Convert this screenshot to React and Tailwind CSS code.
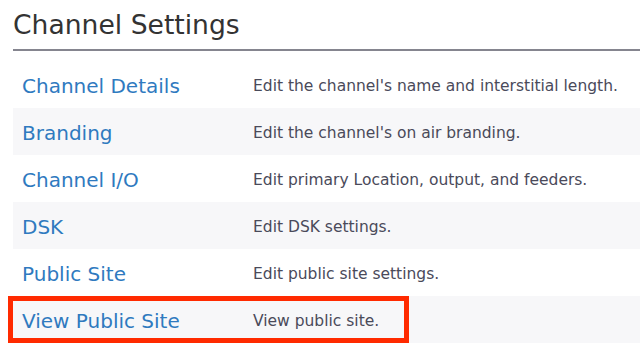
import React from "react";

const rows = [
  ["Channel Details", "Edit the channel's name and interstitial length."],
  ["Branding", "Edit the channel's on air branding."],
  ["Channel I/O", "Edit primary Location, output, and feeders."],
  ["DSK", "Edit DSK settings."],
  ["Public Site", "Edit public site settings."],
  ["View Public Site", "View public site."],
];

export default function App() {
  return (
    <div className="w-[640px] h-[361px] bg-white overflow-hidden" style={{ fontFamily: '"DejaVu Sans", Verdana, sans-serif' }}>
      <div className="pl-[13px]">
        <h1 className="text-[26.6px] leading-[32px] text-[#333333] pt-[9px] pb-[8px]">Channel Settings</h1>
        <div className="h-[2px] bg-[#85858f]" />
        <div className="mt-[10px]">
          {rows.map(([a, b], i) => (
            <div key={a} className={`relative flex items-center h-[47px] ${i % 2 === 1 ? "bg-[#f7f7f9]" : "bg-white"}`}>
              <div className="w-[240px] pl-[9px] text-[20px] leading-[24px] pt-[2px] text-[#2f7abf]">{a}</div>
              <div className="text-[15.5px] leading-[20px] pt-[2px] text-[#4a4a5a]">{b}</div>
              {i === 5 && (
                <div className="absolute left-[-5px] top-0 w-[401px] h-[47px] border-[5px] border-[#ff2a00]" />
              )}
            </div>
          ))}
        </div>
      </div>
    </div>
  );
}
